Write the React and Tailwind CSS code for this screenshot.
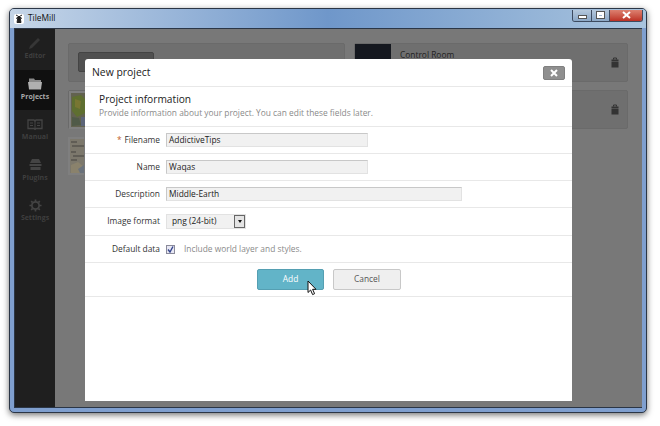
import React from 'react';

const font = { fontFamily: '"Open Sans", "Noto Sans", sans-serif' };

const Field = ({ label, required, children, last }) => (
  <div className={`flex items-center ${last ? 'h-[28px]' : 'h-[27px]'} border-b border-[#e8e8e8]`}>
    <div className="w-[75px] mr-[6px] text-right text-[8.4px] text-[#333] whitespace-nowrap">
      {required && <span className="text-[#c0602a] mr-[3px]">*</span>}
      {label}
    </div>
    {children}
  </div>
);

const TextBox = ({ value, wide }) => (
  <div className={`${wide ? 'w-[296px]' : 'w-[202px]'} h-[14px] bg-[#f1f1f1] border border-[#e2e2e2] border-t-[#c8c8c8] border-l-[#c8c8c8] pl-[2px] text-[8.4px] leading-[12px] text-[#222]`}>
    {value}
  </div>
);

const SideItem = ({ label, active, children }) => (
  <div className={`h-[40.5px] pt-[6px] flex flex-col items-center ${active ? 'bg-[#101010]' : ''}`}>
    <div className="h-[16px] flex items-center">{children}</div>
    <div className={`text-[7px] leading-[9px] font-bold ${active ? 'text-[#a8a8a8]' : 'text-[#3e3e3e]'}`}>{label}</div>
  </div>
);

const Padlock = () => (
  <svg width="8" height="11" viewBox="0 0 8 11">
    <path d="M2.5 2.5 V1 H5.5 V2.5" fill="none" stroke="#333" strokeWidth="1" />
    <path d="M0.5 2.5 H7.5 V4 H0.5 Z M0.5 4.6 H7.5 V10.5 H0.5 Z" fill="#333" />
  </svg>
);

const GreenMap = () => (
  <svg width="16" height="38" viewBox="0 0 16 38" className="block">
    <rect width="16" height="38" fill="#7f7f7f" />
    <rect x="2" y="2" width="14" height="34" fill="#62624f" />
    <path d="M3 6 L12 4 L16 8 V22 L8 26 L3 20 Z" fill="#5f6f30" />
    <path d="M6 8 L12 10 L11 18 L6 16 Z" fill="#787632" />
    <path d="M3 26 L10 27 L12 34 L3 35 Z" fill="#505a48" />
    <path d="M12 26 H16 V35 H12 Z" fill="#5c6478" />
  </svg>
);

const GreyMap = () => (
  <svg width="16" height="38" viewBox="0 0 16 38" className="block">
    <rect width="16" height="38" fill="#7f7f7f" />
    <rect x="2" y="2" width="14" height="34" fill="#7c786c" />
    <path d="M3 5 H9 M4 9 H16 M3 15 H8 M5 19 H16 M3 23 H9" stroke="#45433e" strokeWidth="1.2" />
    <path d="M3 28 L10 25 L16 30 V36 H3 Z" fill="#8a826c" />
    <path d="M10 32 L16 28 V36 H12 Z" fill="#6a727c" />
  </svg>
);

export default function App() {
  return (
    <div className="relative w-[660px] h-[426px] bg-white overflow-hidden" style={font}>
      <div className="ml-[9px] mt-[8px] w-[638px] h-[405px] rounded-[5px] border border-[#2b3646] bg-[#7f9fcf] shadow-[0_2px_6px_rgba(0,0,0,0.55)] px-[4px] pb-[4px] flex flex-col relative">
        {/* title bar */}
        <div className="-mx-[4px] h-[19px] rounded-t-[4px] bg-gradient-to-r from-[#c6d6e8] via-[#6f97ca] to-[#a9c4de] flex items-center pl-[4px] shrink-0">
          <div className="w-[10px] h-[10px] rounded-[2px] bg-white flex items-center justify-center mr-[4px]">
            <svg width="8" height="9" viewBox="0 0 8 9">
              <path d="M3 3 L5 3 L6 8.5 L2 8.5 Z M1 1 L7 4.5 M7 1 L1 4.5" fill="#222" stroke="#222" strokeWidth="1" />
            </svg>
          </div>
          <span className="text-[8.4px] text-[#111]">TileMill</span>
          <div className="ml-auto mr-[3px] mb-[6px] flex h-[12px] border border-[#3d4b60] border-t-0 rounded-b-[3px] overflow-hidden">
            <div className="w-[19px] bg-gradient-to-b from-[#b5c8dc] to-[#8ba7c6] border-r border-[#3d4b60] flex items-end justify-center pb-[2px]">
              <div className="w-[7px] h-[2px] bg-white border border-[#555] box-content" />
            </div>
            <div className="w-[18px] bg-gradient-to-b from-[#b5c8dc] to-[#8ba7c6] border-r border-[#3d4b60] flex items-center justify-center">
              <div className="w-[7px] h-[6px] border-2 border-t-[3px] border-white outline outline-[#555]" />
            </div>
            <div className="w-[32px] bg-gradient-to-b from-[#dc8070] to-[#bc2f24] flex items-center justify-center">
              <svg width="9" height="8" viewBox="0 0 9 8">
                <path d="M1 1 L8 7 M8 1 L1 7" stroke="white" strokeWidth="2" />
              </svg>
            </div>
          </div>
        </div>

        {/* body */}
        <div className="flex-1 flex border border-[#2b3646] min-h-0">
          <div className="w-[40px] bg-[#1f1f1f] shrink-0">
            <SideItem label="Editor">
              <svg width="14" height="14" viewBox="0 0 14 14">
                <path d="M1 13 L2 10 L10 2 L12 4 L4 12 Z" fill="#363636" />
              </svg>
            </SideItem>
            <SideItem label="Projects" active>
              <svg width="16" height="12" viewBox="0 0 16 12">
                <path d="M2 0.5 H7 L8 2 H14 V4 H2 Z" fill="#8a8a8a" />
                <path d="M1 4 H15 L14 11.5 H2 Z" fill="#b0b0b0" />
              </svg>
            </SideItem>
            <SideItem label="Manual">
              <svg width="16" height="11" viewBox="0 0 16 11">
                <path d="M1 1 H7 L8 2 L9 1 H15 V9.5 H9 L8 10.5 L7 9.5 H1 Z" fill="none" stroke="#444" strokeWidth="1.3" />
                <path d="M8 2 V10 M3 4 H6 M3 6.5 H6 M10 4 H13 M10 6.5 H13" stroke="#444" />
              </svg>
            </SideItem>
            <SideItem label="Plugins">
              <svg width="13" height="13" viewBox="0 0 13 13">
                <path d="M3 1 H10 L12 5 H1 Z M0.5 6 H12.5 V8 H0.5 Z M1.5 9 H11.5 V12 H1.5 Z" fill="#444" />
              </svg>
            </SideItem>
            <SideItem label="Settings">
              <svg width="13" height="13" viewBox="0 0 15 15">
                <circle cx="7.5" cy="7.5" r="4.2" fill="none" stroke="#444" strokeWidth="2" />
                <path d="M7.5 0.5 V3 M7.5 12 V14.5 M0.5 7.5 H3 M12 7.5 H14.5 M2.5 2.5 L4 4 M11 11 L12.5 12.5 M12.5 2.5 L11 4 M4 11 L2.5 12.5" stroke="#444" strokeWidth="2" />
              </svg>
            </SideItem>
          </div>

          {/* project list behind the dialog */}
          <div className="flex-1 bg-[#787878] pl-[13px] pr-[14px] pt-[14px] relative">
            <div className="grid grid-cols-[277px_274px] gap-x-[9px] gap-y-[8px]">
              <div className="h-[39px] bg-[#6f6f6f] border border-[#6a6a6a] rounded-[2px] pl-[9px] pt-[8px]">
                <div className="w-[76px] h-[20px] rounded-[2px] bg-[#505050] border border-[#444]" />
              </div>
              <div className="h-[39px] bg-[#6f6f6f] border border-[#6a6a6a] rounded-[2px] flex items-center pr-[8px]">
                <div className="w-[36px] h-[37px] bg-[#15181f]" />
                <div className="ml-[9px] text-[8.4px] text-[#222] self-start mt-[5px]">Control Room</div>
                <div className="ml-auto"><Padlock /></div>
              </div>
              <div className="h-[39px] bg-[#6f6f6f] border border-[#6a6a6a] rounded-[2px]">
                <GreenMap />
              </div>
              <div className="h-[39px] bg-[#6f6f6f] border border-[#6a6a6a] rounded-[2px] flex items-center pr-[8px]">
                <div className="ml-auto"><Padlock /></div>
              </div>
            </div>
            <div className="mt-[8px]"><GreyMap /></div>
          </div>
        </div>
      </div>

      {/* dialog */}
      <div className="absolute left-[85px] top-[59px] w-[487px] h-[342px] bg-white rounded-t-[3px]">
        <div className="h-[28px] border-b border-[#e8e8e8] flex items-center pl-[7px] pr-[7px]">
          <span className="text-[10.4px] text-[#222]">New project</span>
          <div className="ml-auto w-[22px] h-[14px] rounded-[2px] bg-[#8f8f8f] border border-[#808080] flex items-center justify-center">
            <svg width="8" height="8" viewBox="0 0 8 8">
              <path d="M1 1 L7 7 M7 1 L1 7" stroke="white" strokeWidth="2" />
            </svg>
          </div>
        </div>
        <div className="h-[40px] border-b border-[#e8e8e8] pl-[14px] pt-[5px]">
          <div className="text-[10.2px] leading-[14px] text-[#222]">Project information</div>
          <div className="text-[8.4px] leading-[13px] text-[#8a8a8a]">Provide information about your project. You can edit these fields later.</div>
        </div>
        <Field label="Filename" required><TextBox value="AddictiveTips" /></Field>
        <Field label="Name"><TextBox value="Waqas" /></Field>
        <Field label="Description"><TextBox value="Middle-Earth" wide /></Field>
        <Field label="Image format" last>
          <div className="w-[80px] h-[15px] bg-[#f1f1f1] border border-[#e2e2e2] flex items-center justify-between text-[8.4px] text-[#222] pl-[5px]">
            png (24-bit)
            <div className="w-[11px] h-[13px] bg-[#e4e4e4] border border-[#666] flex items-center justify-center">
              <div className="w-0 h-0 border-x-[2.5px] border-x-transparent border-t-[3px] border-t-[#111]" />
            </div>
          </div>
        </Field>
        <Field label="Default data">
          <div className="w-[9px] h-[9px] bg-[#e8e8f4] border border-[#8a8a9a] flex items-center justify-center">
            <svg width="7" height="7" viewBox="0 0 7 7">
              <path d="M1 3.5 L3 6 L6 0.5" fill="none" stroke="#33448c" strokeWidth="1.4" />
            </svg>
          </div>
          <span className="ml-[9px] text-[8.4px] text-[#8a8a8a]">Include world layer and styles.</span>
        </Field>
        <div className="h-[34px] border-b border-[#e8e8e8] flex items-center pl-[172px] pb-[1px]">
          <div className="w-[67px] h-[21px] rounded-[2px] bg-[#62b4c8] border border-[#559fb2] text-[8.4px] text-white flex items-center justify-center">Add</div>
          <div className="ml-[9px] w-[68px] h-[21px] rounded-[2px] bg-[#efefef] border border-[#c8c8c8] text-[8.4px] text-[#555] flex items-center justify-center">Cancel</div>
        </div>
      </div>

      {/* mouse pointer */}
      <svg className="absolute left-[307px] top-[280px]" width="11" height="16" viewBox="0 0 11 16">
        <path d="M1 1 V12.5 L3.6 10 L5.6 14.6 L7.6 13.7 L5.6 9.3 L9 9.3 Z" fill="white" stroke="#111" strokeWidth="1" />
      </svg>
    </div>
  );
}
